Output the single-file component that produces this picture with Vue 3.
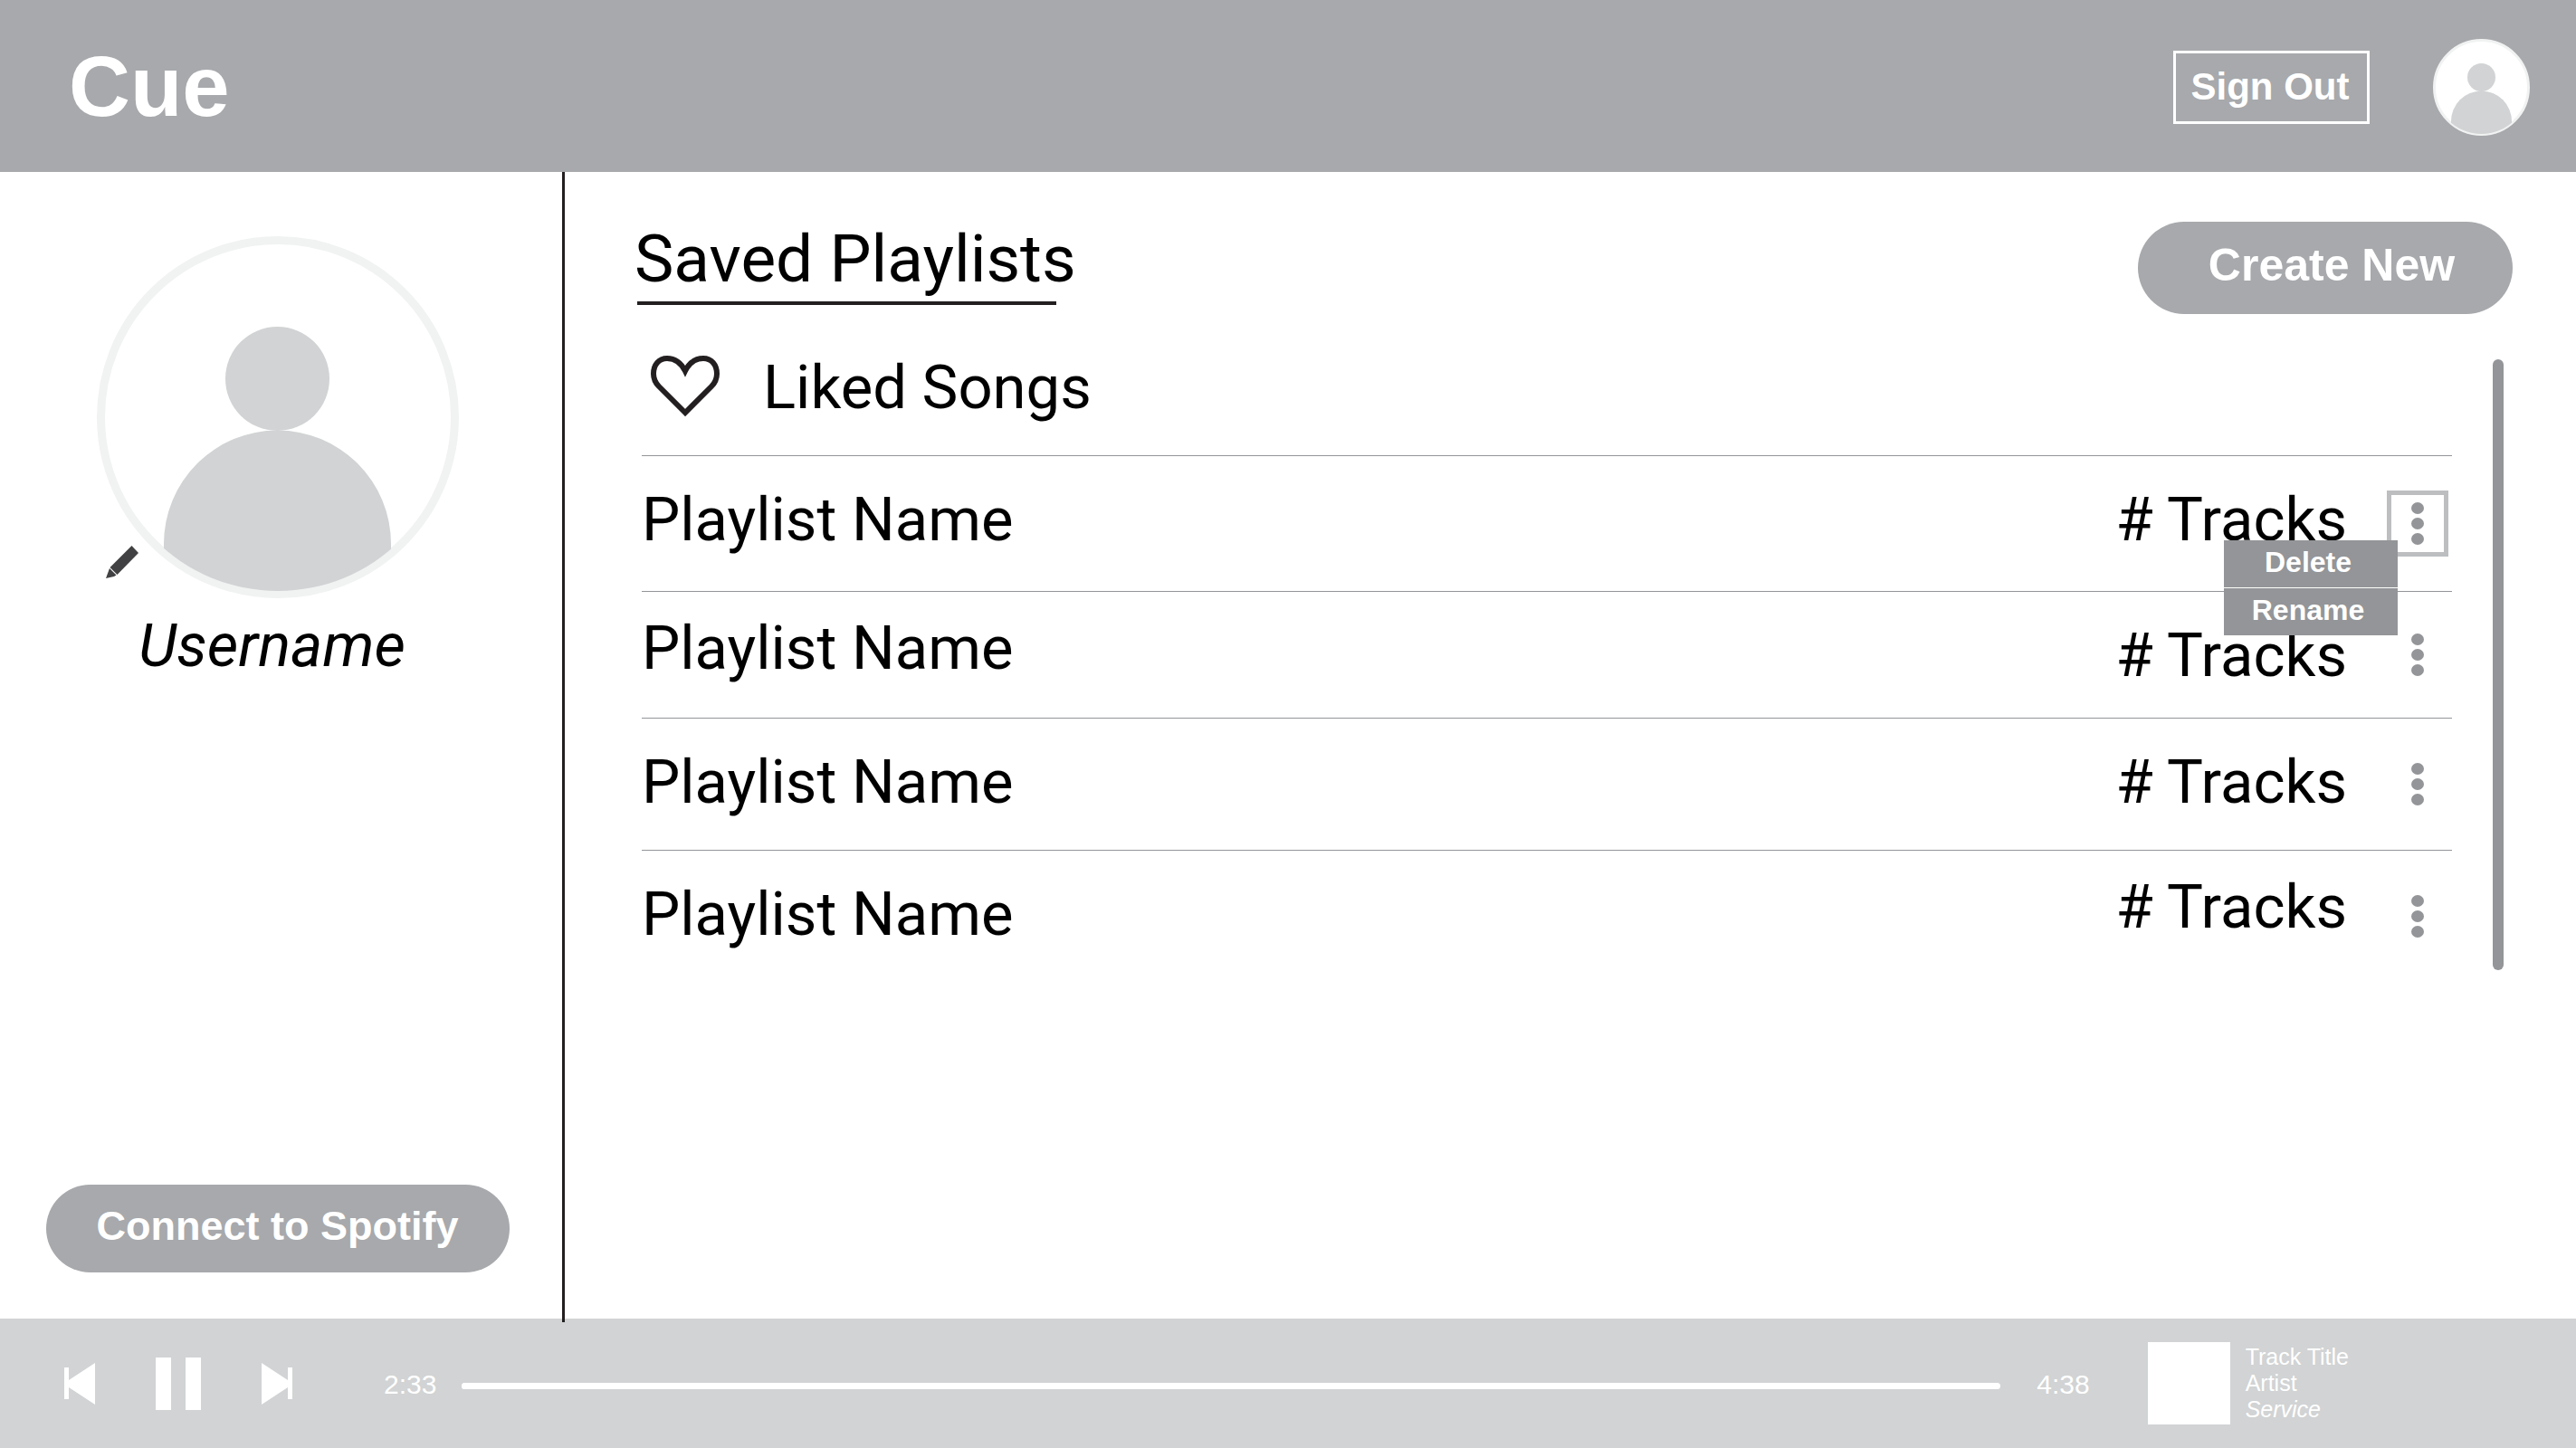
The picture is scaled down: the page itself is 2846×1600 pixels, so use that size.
<script setup>
import { ref } from 'vue'

const playlists = [
  { id: 1, size: 'tall', nameHigh: false, tracksHigh: false },
  { id: 2, size: 'short', nameHigh: true, tracksHigh: false },
  { id: 3, size: 'medium', nameHigh: false, tracksHigh: false },
  { id: 4, size: 'medium', nameHigh: false, tracksHigh: true },
]

const openMenu = ref(1)
const position = ref(0)

function toggleMenu(id) {
  openMenu.value = openMenu.value === id ? null : id
}
</script>

<template>
  <div class="page">
    <header class="topbar">
      <span class="brand">Cue</span>
      <div class="account">
        <button type="button" class="sign-out">Sign Out</button>
        <svg class="avatar-small" viewBox="0 0 107 107" role="img" aria-label="Account">
          <defs>
            <clipPath id="small-clip"><circle cx="53.5" cy="53.5" r="51.5" /></clipPath>
          </defs>
          <circle cx="53.5" cy="53.5" r="52" fill="#fff" stroke="#f1f2f2" stroke-width="3" />
          <g fill="#d1d3d4" clip-path="url(#small-clip)">
            <circle cx="53.5" cy="42.5" r="15.5" />
            <path d="M20 107V91a33.5 33.5 0 0 1 67 0v16z" />
          </g>
        </svg>
      </div>
    </header>

    <div class="body">
      <aside class="sidebar">
        <div class="profile">
          <svg class="avatar" viewBox="0 0 400 400" role="img" aria-label="Profile picture">
            <defs>
              <clipPath id="large-clip"><circle cx="200" cy="200" r="192" /></clipPath>
            </defs>
            <circle cx="200" cy="200" r="195.5" fill="#fff" stroke="#f1f2f2" stroke-width="9" />
            <g fill="#d1d3d4" clip-path="url(#large-clip)">
              <circle cx="199.5" cy="157.5" r="57.5" />
              <path d="M74 400V340a125.5 125.5 0 0 1 251 0v60z" />
            </g>
          </svg>
          <button type="button" class="edit" aria-label="Edit profile">
            <svg viewBox="0 0 36 36" fill="#414042">
              <path d="M28.5 0L36 8L12.5 32L4.5 24z" />
              <path d="M4 25L11.5 32.5L9 34L0 36z" />
            </svg>
          </button>
        </div>
        <p class="username">Username</p>
        <button type="button" class="pill connect">Connect to Spotify</button>
      </aside>

      <main class="content">
        <div class="heading">
          <h1>Saved Playlists</h1>
          <button type="button" class="pill create">Create New</button>
        </div>

        <div class="library">
          <div class="lists">
            <a href="#liked" class="liked">
              <svg viewBox="0 0 76 68" fill="none" stroke="#231f20" stroke-width="6" aria-hidden="true">
                <path d="M38 63L9 34C4 29 3 25 3 20C3 10 9 3 18 3C27 3 33 7 38 17C43 7 49 3 58 3C67 3 73 10 73 20C73 25 72 29 67 34z" />
              </svg>
              <span>Liked Songs</span>
            </a>
            <table>
              <tbody>
                <tr v-for="p in playlists" :key="p.id" :class="p.size">
                  <td :class="{ high: p.nameHigh }">Playlist Name</td>
                  <td class="tracks" :class="{ high: p.tracksHigh }"># Tracks</td>
                  <td class="actions">
                    <div class="menu-anchor">
                      <button
                        type="button"
                        class="more"
                        :class="{ open: openMenu === p.id }"
                        aria-label="Playlist options"
                        @click="toggleMenu(p.id)"
                      >
                        <i></i><i></i><i></i>
                      </button>
                      <div v-if="openMenu === p.id" class="menu">
                        <button type="button">Delete</button>
                        <button type="button">Rename</button>
                      </div>
                    </div>
                  </td>
                </tr>
              </tbody>
            </table>
          </div>
          <div class="scrollbar" aria-hidden="true"></div>
        </div>
      </main>
    </div>

    <footer class="player">
      <div class="controls">
        <button type="button" aria-label="Previous track">
          <svg width="34" height="46" viewBox="0 0 34 46" fill="#fff">
            <path d="M0 5H5V19L34 0V46L5 27V40H0z" />
          </svg>
        </button>
        <button type="button" aria-label="Pause">
          <svg width="50" height="58" viewBox="0 0 50 58" fill="#fff">
            <path d="M0 0H17V58H0zM33 0H50V58H33z" />
          </svg>
        </button>
        <button type="button" aria-label="Next track">
          <svg width="34" height="46" viewBox="0 0 34 46" fill="#fff">
            <path d="M34 5H29V19L0 0V46L29 27V40H34z" />
          </svg>
        </button>
      </div>
      <span class="time">2:33</span>
      <input v-model="position" class="seek" type="range" min="0" max="278" aria-label="Track position" />
      <span class="time">4:38</span>
      <div class="cover"></div>
      <div class="track">
        <span>Track Title</span>
        <span>Artist</span>
        <em>Service</em>
      </div>
    </footer>
  </div>
</template>

<style>
body {
  margin: 0;
  background: #fff;
}
</style>

<style scoped>
* {
  box-sizing: border-box;
}

.page {
  display: flex;
  flex-direction: column;
  min-height: 100vh;
  color: #000;
  font-family: Roboto, sans-serif;
}

button {
  margin: 0;
  padding: 0;
  border: 0;
  background: none;
  color: #fff;
  font: bold 45px/56px "Liberation Sans", Arial, sans-serif;
  cursor: pointer;
}

svg {
  display: block;
}

.topbar {
  display: flex;
  align-items: center;
  justify-content: space-between;
  height: 190px;
  padding: 2px 51px 0 76px;
  background: #a7a9ac;
}

.brand {
  color: #fff;
  font: bold 94px/108px "Liberation Sans", Arial, sans-serif;
}

.account {
  display: flex;
  align-items: center;
  gap: 70px;
}

.sign-out {
  width: 217px;
  height: 81px;
  padding-right: 3px;
  border: 3px solid #fff;
  font-size: 42px;
}

.avatar-small {
  width: 107px;
  height: 107px;
}

.body {
  display: flex;
  flex: 1;
}

.sidebar {
  position: relative;
  display: flex;
  flex: none;
  flex-direction: column;
  align-items: center;
  width: 624px;
  margin-bottom: -4px;
  padding: 71px 8px 55px 0;
  border-right: 3px solid #231f20;
}

.profile {
  position: relative;
}

.avatar {
  width: 400px;
  height: 400px;
}

.edit {
  position: absolute;
  bottom: 22px;
  left: 10px;
  width: 36px;
  height: 36px;
}

.username {
  margin: 14px 12px 0 0;
  font-size: 67px;
  font-style: italic;
  line-height: 76px;
}

.pill {
  border-radius: 52px;
  background: #a7a9ac;
}

.connect {
  width: 512px;
  height: 97px;
  margin-top: auto;
  padding-bottom: 6px;
}

.content {
  flex: 1;
  min-width: 0;
  padding: 53px 70px 40px 77px;
}

.heading {
  display: flex;
  align-items: flex-end;
  justify-content: space-between;
  height: 104px;
}

h1 {
  align-self: flex-start;
  margin: 0;
  font-size: 73px;
  font-weight: 400;
  line-height: 86px;
}

h1::after {
  content: "";
  display: block;
  width: 463px;
  height: 4px;
  margin: 4px 0 0 3px;
  background: #231f20;
}

.create {
  width: 414px;
  height: 102px;
  padding: 0 0 6px 14px;
  font-size: 50px;
}

.library {
  display: flex;
  gap: 45px;
  margin: 43px 10px 0 8px;
}

.lists {
  flex: 1;
  min-width: 0;
  font-size: 67px;
  line-height: 76px;
}

.liked {
  display: flex;
  align-items: flex-start;
  gap: 48px;
  height: 113px;
  padding-left: 10px;
  color: inherit;
  text-decoration: none;
}

.liked svg {
  width: 76px;
  height: 68px;
  margin-top: 3px;
}

table {
  width: 100%;
  border-collapse: separate;
  border-spacing: 0;
}

td {
  padding: 32px 0 0;
  border-top: 1px solid #939598;
  vertical-align: top;
  white-space: nowrap;
}

td.high {
  padding-top: 24px;
}

.tall {
  height: 150px;
}

.short {
  height: 140px;
}

.medium {
  height: 146px;
}

.tracks {
  padding-right: 44px;
  text-align: right;
}

td.actions {
  width: 72px;
  padding: 0 4px 0 0;
  vertical-align: middle;
}

.menu-anchor {
  position: relative;
}

.more {
  display: flex;
  flex-direction: column;
  align-items: center;
  justify-content: center;
  gap: 4px;
  width: 68px;
  height: 73px;
  border: 5px solid transparent;
}

.more.open {
  border-color: #bcbec0;
}

.more i {
  width: 14px;
  height: 13px;
  border-radius: 50%;
  background: #939598;
}

.menu {
  position: absolute;
  top: 55px;
  right: 56px;
  z-index: 1;
  display: grid;
  gap: 1px;
  width: 192px;
  background: #fff;
}

.menu button {
  height: 52px;
  padding: 0 6px 4px 0;
  background: #939598;
  font-size: 32px;
  line-height: 36px;
}

.scrollbar {
  width: 12px;
  margin: 7px 0 13px;
  border-radius: 6px;
  background: #939598;
}

.player {
  display: flex;
  align-items: center;
  height: 143px;
  padding: 0 251px 0 71px;
  background: #d1d3d4;
  color: #fff;
  font-family: "Liberation Sans", Arial, sans-serif;
}

.controls {
  display: flex;
  align-items: center;
  gap: 67px;
  margin-right: 101px;
}

.time {
  padding-top: 3px;
  font-size: 30px;
  line-height: 36px;
}

.seek {
  flex: 1;
  min-width: 0;
  height: 7px;
  margin: 6px 40px 0 28px;
  border-radius: 4px;
  background: #fff;
  appearance: none;
}

.seek::-webkit-slider-thumb {
  width: 7px;
  height: 7px;
  border-radius: 50%;
  background: #fff;
  appearance: none;
}

.cover {
  width: 91px;
  height: 91px;
  margin: 0 17px 0 64px;
  background: #fff;
}

.track {
  display: flex;
  flex-direction: column;
  font-size: 25px;
  line-height: 29px;
}
</style>
